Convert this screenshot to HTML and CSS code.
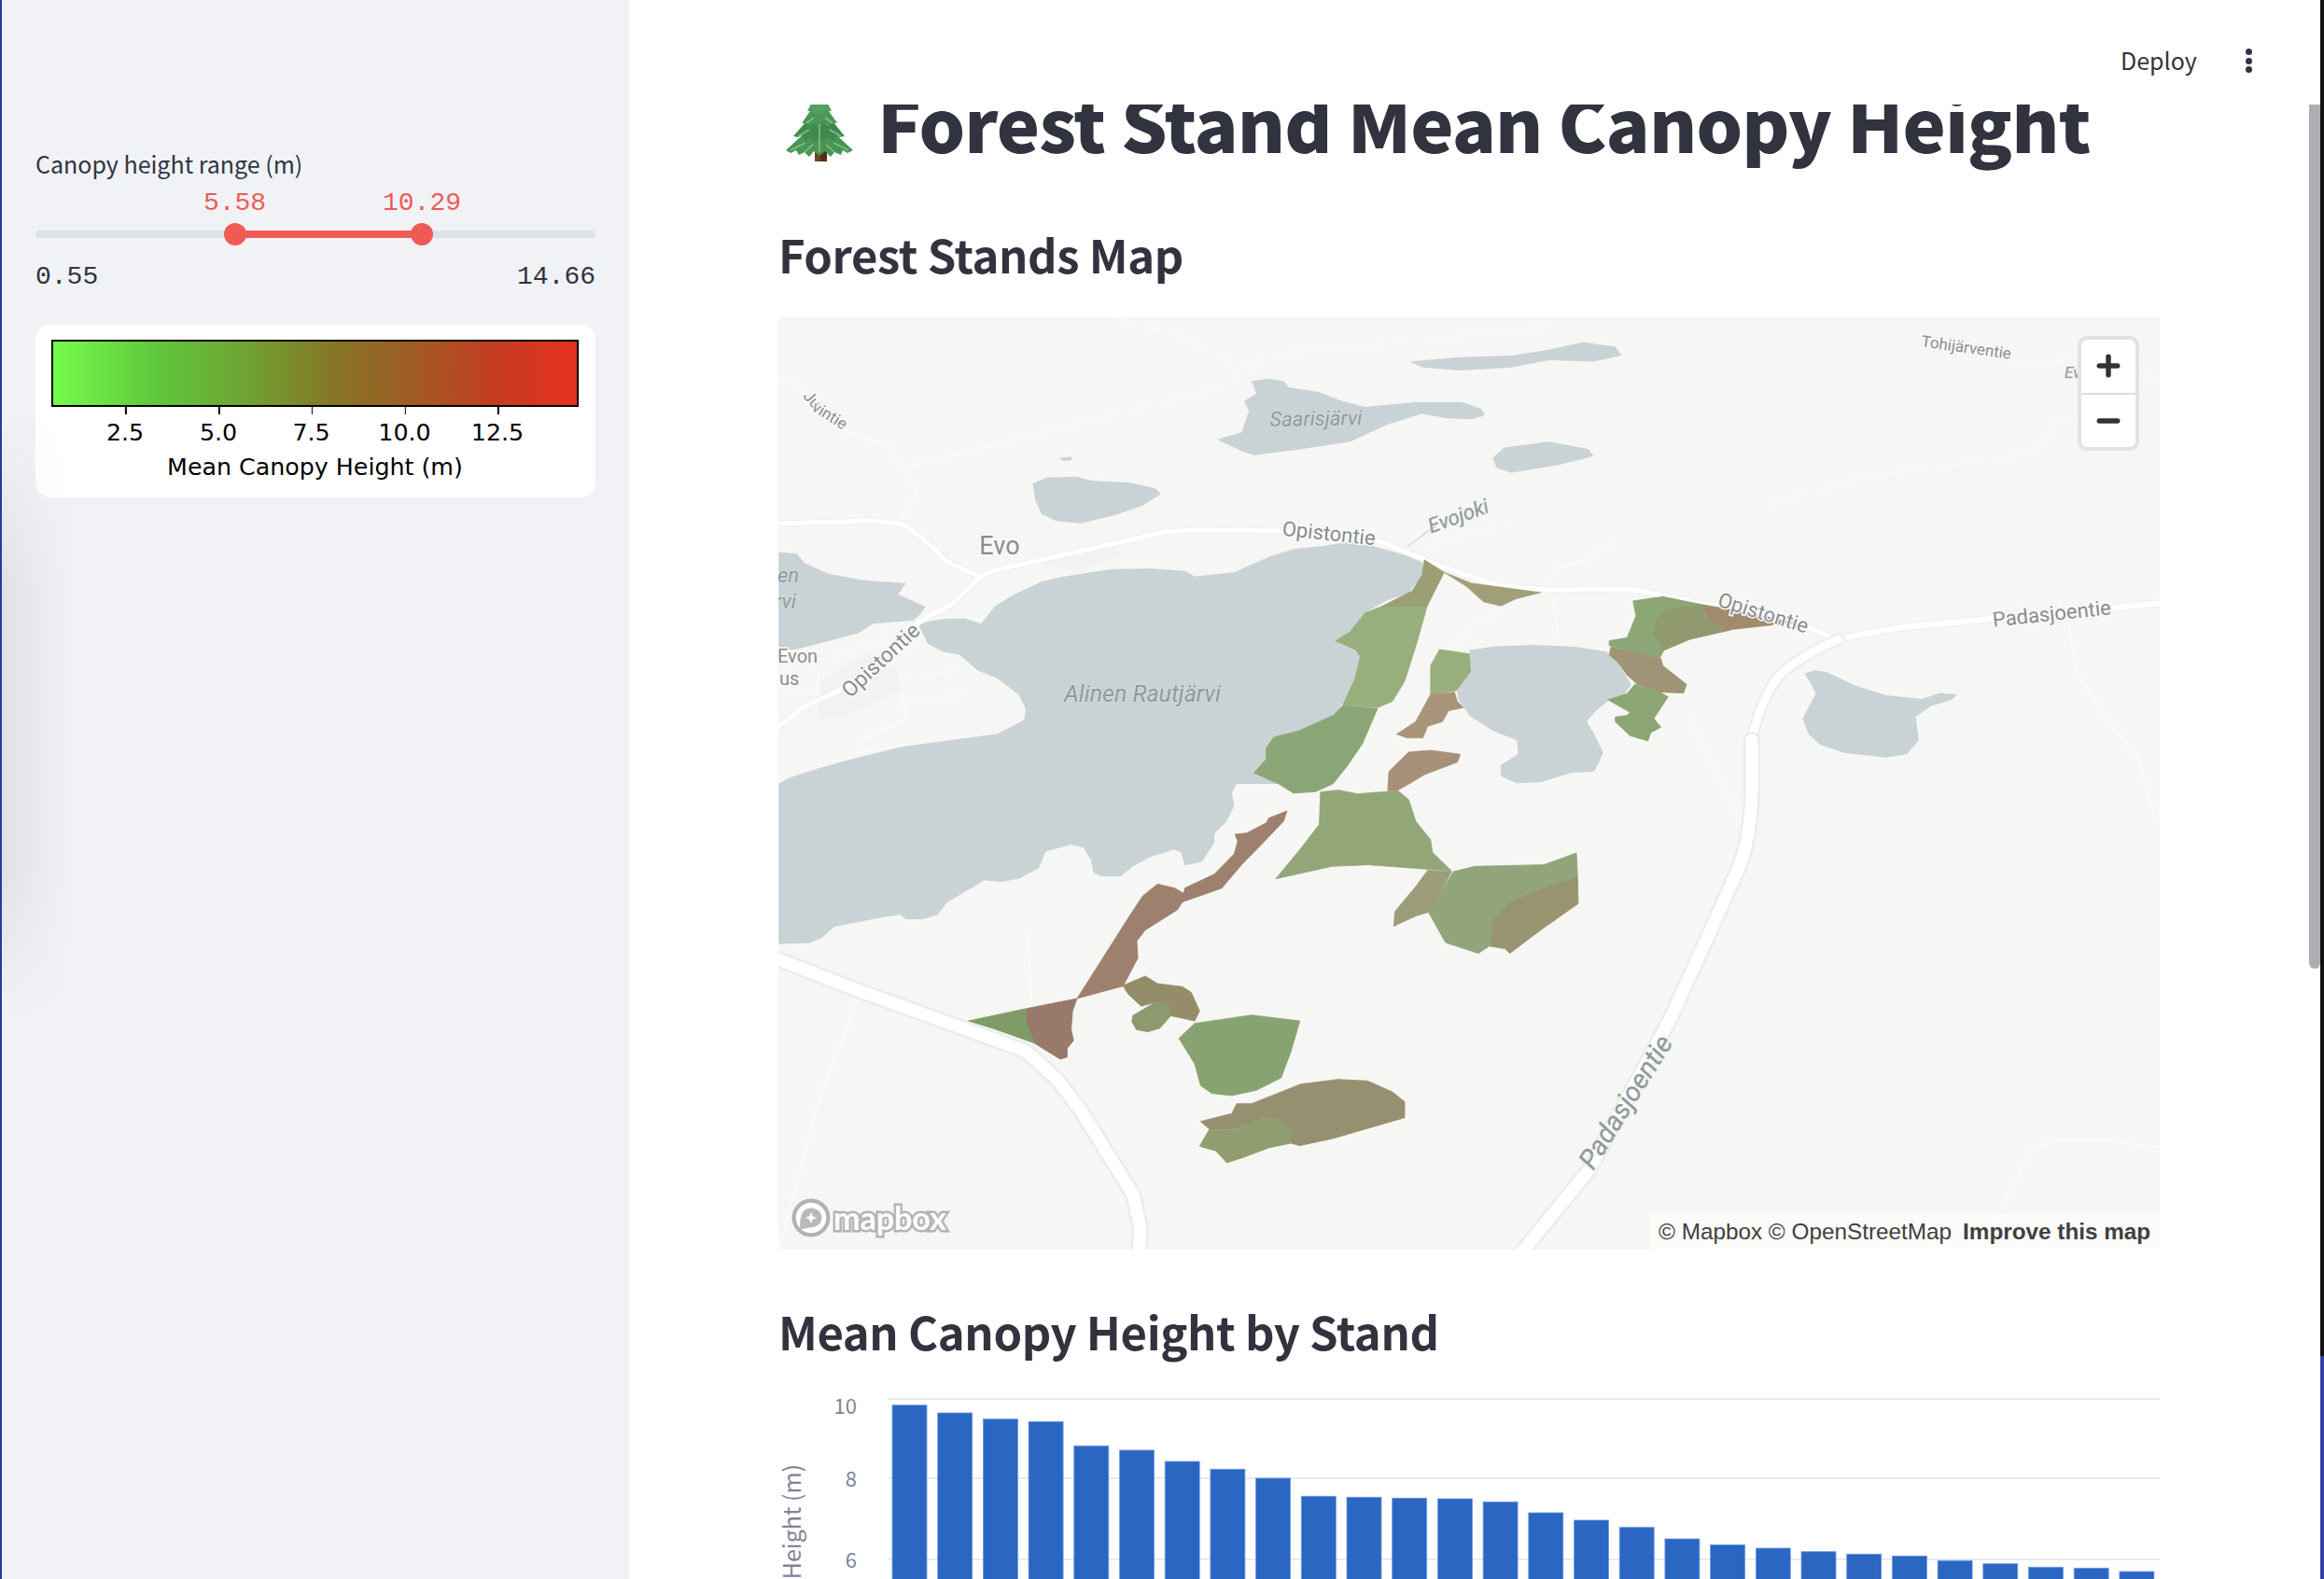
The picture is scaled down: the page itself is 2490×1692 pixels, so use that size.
FILE: index.html
```html
<!DOCTYPE html>
<html lang="en">
<head>
<meta charset="utf-8">
<title>Forest Stand Mean Canopy Height</title>
<link rel="stylesheet" href="styles.css">
</head>
<body>
<div class="app">
  <aside class="sidebar">
    <div class="slider-label">Canopy height range (m)</div>
    <div class="slider">
      <div class="slider-values"><span class="val val-a">5.58</span><span class="val val-b">10.29</span></div>
      <div class="track"><div class="fill"></div><span class="thumb thumb-a"></span><span class="thumb thumb-b"></span></div>
      <div class="slider-range"><span>0.55</span><span>14.66</span></div>
    </div>
    <div class="legend-card">
      <div class="colorbar"></div>
      <div class="ticks"><span class="tick">2.5</span><span class="tick">5.0</span><span class="tick">7.5</span><span class="tick">10.0</span><span class="tick">12.5</span></div>
      <div class="legend-title">Mean Canopy Height (m)</div>
    </div>
  </aside>
  <main class="main">
    <header class="topbar">
      <span class="deploy">Deploy</span>
      <span class="kebab"><i></i><i></i><i></i></span>
    </header>
    <h1 class="title">
      <svg class="tree" viewBox="0 0 76 76" aria-hidden="true">
        <rect x="32" y="50" width="13" height="24" fill="#6d4426"/>
        <rect x="38" y="50" width="7" height="24" fill="#4f2f18"/>
        <path d="M37 30 L60 50 L73 62 L67 65 L62 62 L60 67 L53 64 L49 69 L43 63 L37 68 L31 63 L26 69 L21 64 L15 67 L12 62 L6 65 L1 62 L14 50Z" fill="#4a9556"/>
        <path d="M37 18 L52 32 L64 47 L58 48 L55 46 L52 52 L46 48 L41 54 L37 49 L32 54 L27 48 L21 52 L18 46 L14 48 L9 47 L22 32Z" fill="#3f8a4d"/>
        <path d="M37 8 L47 20 L56 33 L50 33 L46 37 L41 33 L37 38 L32 33 L27 37 L23 33 L18 33 L27 20Z" fill="#4a9858"/>
        <path d="M37 -8 L44 8 L50 20 L44 20 L40 23 L37 20 L33 23 L29 20 L24 20 L30 8Z" fill="#54a061"/>
        <path d="M6 62 L22 54 M68 62 L52 54 M21 64 L30 56 M53 64 L44 56 M14 47 L26 40 M60 47 L48 40 M23 33 L31 27 M51 33 L43 27 M37 34 L37 64" stroke="#7fbf83" stroke-width="1.6" fill="none"/>
      </svg>
      <span>Forest Stand Mean Canopy Height</span>
    </h1>
    <h2 class="heading heading-map">Forest Stands Map</h2>
    <div class="map">
      <svg class="map-svg" viewBox="834 340 1480 999" aria-label="Map of forest stands">
        <rect class="land" x="834" y="340" width="1480" height="999"/>

        <!-- faint tracks -->
        <g transform="translate(830 340) scale(.5294 .3333)" class="track-thin">
          <path d="M8 195 L40 210 L60 250 L140 365 L225 410 L260 480 L290 560 L250 660"/>
          <path class="dotted" d="M270 480 L900 230 L1000 120 L1568 30"/>
          <path class="dotted" d="M690 0 L850 75 L860 110 L950 160"/>
          <path class="grey" d="M1280 738 L1320 690 L1340 670"/>
          <path class="dotted" d="M1320 740 L1480 660"/>
          <path class="dotted" d="M1370 1070 L1410 985 L1490 930"/>
          <path class="dotted" d="M245 1160 L370 1135 M250 1230 L380 1215"/>
          <path d="M250 1170 L268 1290 L170 1365 L165 1400 L260 1375"/>
          <path class="dotted" d="M110 1100 L230 1030"/>
          <path d="M90 1140 L85 1210 L20 1210"/>
        </g>
        <g class="track-thin">
          <path d="M1665 610 L1700 600 L1730 580 M1660 620 L1670 680"/>
          <path d="M1810 770 L1840 830 L1865 880 L1870 900"/>
          <path d="M2215 660 L2225 720 L2260 775 L2290 810 L2310 880"/>
          <path class="dotted" d="M1900 540 L2000 510 L2080 500 L2180 485 L2205 450 L2260 440 L2290 465 M2150 390 L2230 385 M2290 400 L2314 408"/>
          <path d="M2314 1229 L2290 1227 L2260 1222 L2200 1222 L2175 1235 L2135 1310 L2112 1339"/>
          <path d="M920 1070 L880 1170 L834 1340 M1100 992 L1105 1070 L1095 1100 L1090 1130"/>
        </g>
        <path class="patch" d="M1120 595 L1195 580 L1200 596 L1150 612 L1118 605Z"/>
        <path class="patch" d="M880 730 L930 700 L960 715 L965 740 L900 770 L877 770Z"/>

        <!-- water -->
        <g class="water">
          <g transform="translate(830 340) scale(.5294 .3333)">
            <path d="M290 985 L340 970 L385 968 L418 985 L445 930 L480 895 L540 850 L580 835 L680 810 L760 808 L830 815 L850 833 L930 820 L965 795 L1000 770 L1050 745 L1110 735 L1160 722 L1210 735 L1310 780 L1315 830 L1290 870 L1285 885 L1240 910 L1200 945 L1185 985 L1135 1040 L1175 1075 L1185 1090 L1175 1160 L1150 1240 L1130 1280 L1060 1330 L1010 1350 L995 1385 L995 1420 L970 1465 L1020 1500 L935 1500 L925 1530 L930 1570 L915 1620 L890 1660 L890 1690 L865 1750 L830 1762 L822 1720 L808 1712 L760 1735 L725 1765 L700 1798 L660 1797 L645 1785 L640 1745 L625 1705 L600 1695 L548 1718 L535 1770 L495 1805 L458 1815 L425 1810 L350 1880 L330 1920 L300 1935 L265 1935 L255 1920 L215 1930 L120 1960 L95 1995 L70 2012 L8 2015 L8 1500 L30 1480 L100 1445 L170 1415 L260 1380 L330 1365 L400 1350 L450 1340 L505 1295 L508 1260 L495 1215 L450 1160 L410 1135 L375 1085 L340 1075 L310 1050Z"/>
            <path d="M8 755 L45 760 L60 790 L110 825 L180 845 L265 855 L250 890 L305 930 L295 955 L280 975 L200 985 L170 1015 L100 1045 L50 1065 L8 1075Z"/>
            <path d="M522 535 L550 515 L610 512 L640 525 L720 532 L770 550 L782 568 L745 605 L690 635 L620 662 L570 655 L540 632 L528 590Z"/>
            <path d="M965 205 L1000 197 L1030 205 L1040 225 L1100 240 L1150 270 L1195 288 L1300 272 L1390 272 L1430 295 L1438 315 L1410 328 L1360 325 L1310 310 L1240 345 L1165 400 L1060 425 L970 443 L945 430 L895 393 L945 370 L960 300 L950 270 L975 245Z"/>
            <path d="M575 452 L600 448 L602 458 L585 463Z"/>
          </g>
          <g transform="scale(1.588)">
            <path d="M951 244 L985 241 L1020 240 L1045 236 L1068 231 L1090 234 L1094 240 L1075 244 L1045 243 L1020 248 L985 250 L960 248Z"/>
            <path d="M1007 309 L1015 302 L1045 298 L1072 303 L1075 308 L1050 314 L1020 319 L1010 316Z"/>
          </g>
          <g transform="translate(1300 560) scale(.6378 .3333)">
            <path d="M430 410 L470 398 L540 393 L610 400 L660 415 L680 450 L702 520 L690 555 L665 570 L640 610 L627 640 L640 680 L655 740 L640 800 L600 805 L550 835 L510 838 L483 815 L482 780 L512 745 L510 700 L470 670 L430 620 L412 570 L408 530 L432 470Z"/>
            <path d="M993 485 L1010 475 L1030 480 L1080 525 L1130 555 L1190 567 L1220 548 L1250 552 L1240 570 L1205 590 L1180 625 L1185 700 L1165 745 L1130 755 L1060 740 L1020 715 L1000 680 L990 630 L1012 550 L1003 515Z"/>
          </g>
        </g>

        <!-- roads -->
        <g class="roads">
          <path class="road-edge" d="M830 782 L862 757 L909 735 L957 707 L983.5 667 L1020.6 647 L1050 618 L1063 612 L1248 570 L1280 568 L1378 569 L1470 577 L1545 607 L1603 627 L1660 632 L1745 631 L1826 647 L1925 667 L1966 685"/>
          <path class="road-edge" d="M834 561 L936 558 L968 562 L989 577 L1015 602 L1050 618"/>
          <path class="road-core" d="M830 782 L862 757 L909 735 L957 707 L983.5 667 L1020.6 647 L1050 618 L1063 612 L1248 570 L1280 568 L1378 569 L1470 577 L1545 607 L1603 627 L1660 632 L1745 631 L1826 647 L1925 667 L1966 685"/>
          <path class="road-core" d="M834 561 L936 558 L968 562 L989 577 L1015 602 L1050 618"/>
          <path class="road-mid-edge" d="M2320 646 L2135 663 L2040 672 Q1990 680 1970 685"/>
          <path class="road-mid-core" d="M2320 646 L2135 663 L2040 672 Q1990 680 1970 685"/>
          <path class="road-mid2-edge" d="M1970 685 Q1925 705 1905 725 Q1884 755 1877 793"/>
          <path class="road-mid2-core" d="M1970 685 Q1925 705 1905 725 Q1884 755 1877 793"/>
          <path class="road-wide-edge" d="M1877 793 L1877 850 Q1875 900 1864 927 L1842 977 L1804 1060 L1789 1093 L1703 1253 L1628 1345"/>
          <path class="road-wide-core" d="M1877 793 L1877 850 Q1875 900 1864 927 L1842 977 L1804 1060 L1789 1093 L1703 1253 L1628 1345"/>
          <path class="road-wide-edge" d="M826 1025 L924 1063 L1063 1113 L1100 1127 L1133 1157 L1158 1190 L1214 1280 L1222 1317 L1220 1345"/>
          <path class="road-wide-core" d="M826 1025 L924 1063 L1063 1113 L1100 1127 L1133 1157 L1158 1190 L1214 1280 L1222 1317 L1220 1345"/>
        </g>

        <!-- stands -->
        <g class="stands">
        <g transform="translate(830 340) scale(.5294 .3333)">
          <path fill="#9c9e73" stroke="#9c9e73" d="M1315 780 L1355 820 L1320 930 L1228 930 L1290 880 L1310 830Z"/>
          <path fill="#a09f77" stroke="#a09f77" d="M1355 820 L1410 855 L1550 885 L1500 905 L1470 928 L1435 915 L1400 865Z"/>
          <path fill="#97ae7d" stroke="#97ae7d" d="M1228 930 L1320 930 L1315 960 L1300 1045 L1275 1170 L1250 1235 L1220 1255 L1150 1245 L1175 1160 L1185 1090 L1175 1070 L1135 1040 L1165 1010 L1195 950Z"/>
          <path fill="#8ba676" stroke="#8ba676" d="M1150 1247 L1220 1258 L1190 1370 L1160 1440 L1130 1500 L1095 1525 L1050 1530 L1020 1500 L970 1465 L995 1420 L995 1385 L1010 1350 L1060 1330 L1130 1280Z"/>
        </g>
        <g transform="translate(1300 560) scale(.6378 .3333)">
          <path fill="#99ae7e" stroke="#99ae7e" d="M380 408 L430 422 L432 480 L408 540 L365 552 L365 460Z"/>
          <path fill="#a89478" stroke="#a89478" d="M365 552 L405 545 L410 575 L420 595 L395 605 L385 640 L360 655 L352 692 L325 692 L308 680 L340 640Z"/>
          <path fill="#a88f78" stroke="#a88f78" d="M328 738 L365 732 L415 745 L410 770 L355 810 L320 850 L308 862 L293 862 L295 800Z"/>
          <path fill="#92a678" stroke="#92a678" d="M180 866 L210 860 L242 872 L310 862 L328 890 L340 960 L365 1020 L368 1060 L400 1120 L330 1110 L260 1100 L200 1105 L105 1145 L150 1040 L178 970Z"/>
          <path fill="#9c9c79" stroke="#9c9c79" d="M360 1118 L400 1122 L365 1250 L340 1265 L303 1298 L305 1250 L340 1170Z"/>
          <path fill="#92a479" stroke="#92a479" d="M403 1122 L440 1105 L555 1100 L610 1062 L612 1140 L560 1170 L495 1225 L470 1280 L465 1360 L445 1385 L390 1350 L362 1255Z"/>
          <path fill="#97946f" stroke="#97946f" d="M612 1140 L613 1225 L550 1310 L498 1385 L490 1370 L465 1362 L470 1280 L495 1225 L560 1170Z"/>
          <path fill="#8da675" stroke="#8da675" d="M705 252 L755 238 L825 265 L826 305 L865 345 L800 375 L757 410 L750 435 L700 415 L665 395 L665 380 L695 370 L710 300Z"/>
          <path fill="#91996e" stroke="#91996e" d="M745 310 L760 280 L825 265 L826 305 L870 345 L800 375 L757 410 L740 360Z"/>
          <path fill="#a28a6c" stroke="#a28a6c" d="M825 265 L900 290 L975 322 L910 335 L865 345 L828 305Z"/>
          <path fill="#9f9475" stroke="#9f9475" d="M668 400 L700 415 L752 437 L755 460 L795 520 L790 548 L750 545 L712 520 L695 490 L680 450 L665 425Z"/>
          <path fill="#8ba573" stroke="#8ba573" d="M708 520 L750 545 L764 560 L740 630 L752 658 L735 675 L730 702 L700 685 L675 640 L675 625 L695 620 L700 610 L663 570 L695 550Z"/>
        </g>
        <g transform="translate(830 840) scale(.5294 .3333)">
          <path fill="#9e806e" stroke="#9e806e" d="M1037 87 L1030 120 L985 195 L945 260 L905 335 L825 380 L815 405 L750 470 L733 505 L735 560 L705 650 L612 690 L660 570 L720 420 L745 360 L775 322 L810 335 L828 352 L830 335 L890 290 L930 225 L937 185 L932 162 L955 158 L995 125 L1000 110Z"/>
          <path fill="#98796a" stroke="#98796a" d="M612 690 L510 722 L508 760 L525 833 L578 885 L592 878 L592 850 L605 825 L600 790 L603 730Z"/>
          <path fill="#7f9c68" stroke="#7f9c68" d="M510 722 L392 762 L440 785 L525 833 L508 760Z"/>
          <path fill="#958d6a" stroke="#958d6a" d="M705 648 L750 618 L775 642 L825 652 L843 670 L860 730 L850 762 L800 745 L795 710 L770 702 L742 715 L715 675Z"/>
          <path fill="#8d9a6f" stroke="#8d9a6f" d="M725 745 L770 702 L795 705 L802 745 L780 785 L755 797 L732 790 L723 765Z"/>
          <path fill="#87a372" stroke="#87a372" d="M818 818 L850 770 L965 743 L1063 762 L1045 860 L1025 945 L975 985 L925 1002 L885 995 L862 970 L850 900Z"/>
          <path fill="#95906f" stroke="#95906f" d="M1065 965 L1140 950 L1200 955 L1250 990 L1275 1022 L1275 1073 L1130 1140 L1062 1163 L1045 1155 L1045 1110 L1020 1080 L990 1070 L965 1090 L930 1110 L880 1110 L862 1085 L925 1060 L935 1028 L965 1028Z"/>
          <path fill="#8f9d70" stroke="#8f9d70" d="M880 1110 L930 1112 L965 1090 L990 1070 L1020 1080 L1045 1110 L1045 1155 L1000 1170 L950 1200 L915 1218 L893 1180 L860 1165Z"/>
        </g>
        </g>

        <!-- labels -->
        <text class="ml ml-xl" transform="translate(1071 594)">Evo</text>
        <text class="ml" transform="translate(1423 579) rotate(6)">Opistontie</text>
        <text class="ml ml-md" transform="translate(949 713) rotate(-43)">Opistontie</text>
        <text class="ml ml-it" transform="translate(1565 560) rotate(-20)">Evojoki</text>
        <text class="ml ml-it" transform="translate(1410 456) rotate(-1)">Saarisjärvi</text>
        <text class="ml ml-it ml-lg" transform="translate(1224 752)">Alinen Rautjärvi</text>
        <text class="ml ml-it ml-start" transform="translate(833 624)">en</text>
        <text class="ml ml-it ml-start" transform="translate(830 652)">rvi</text>
        <text class="ml ml-sm ml-start" transform="translate(833 710)">Evon</text>
        <text class="ml ml-sm ml-start" transform="translate(835 734)">us</text>
        <text class="ml ml-xs" transform="translate(866 432) rotate(48)">Ju</text>
        <text class="ml ml-xs" transform="translate(886 450) rotate(32)">vintie</text>
        <text class="ml ml-xs" transform="translate(2106 378) rotate(8)">Tohijärventie</text>
        <text class="ml ml-it ml-xs ml-start" transform="translate(2212 405)">Ev</text>
        <text class="ml" transform="translate(2199 665) rotate(-6)">Padasjoentie</text>
        <text class="ml" transform="translate(1887 664) rotate(17)">Opistontie</text>
        <text class="ml ml-xxl ml-it" transform="translate(1750 1186) rotate(-58)">Padasjoentie</text>
      </svg>
      <div class="zoom-ctl">
        <button class="zoom-btn" type="button" aria-label="Zoom in"><svg viewBox="0 0 24 24"><path d="M12 3v18M3 12h18"/></svg></button>
        <button class="zoom-btn" type="button" aria-label="Zoom out"><svg viewBox="0 0 24 24"><path d="M3 12h18"/></svg></button>
      </div>
      <div class="mapbox-logo">
        <svg viewBox="0 0 40 42" aria-hidden="true">
          <circle cx="20" cy="21" r="17.5" fill="#fff" stroke="#b2b2b2" stroke-width="4"/>
          <path d="M9 33 C8 22 10 11 20 11 C27 11 31 16 31 21 C31 28 24 31 18 31Z" fill="#b9b9b9"/>
          <path d="M20 15 l1.6 4.4 4.4 1.6 -4.4 1.6 -1.6 4.4 -1.6 -4.4 -4.4 -1.6 4.4 -1.6Z" fill="#fff"/>
        </svg>
        <span>mapbox</span>
      </div>
      <div class="attrib"><span>© Mapbox © OpenStreetMap</span><b>Improve this map</b></div>
    </div>
    <h2 class="heading heading-chart">Mean Canopy Height by Stand</h2>
    <svg class="chart" viewBox="834 1490 1480 202" aria-label="Bar chart">
      <path class="grid" d="M951 1499H2314M951 1584H2314M951 1671H2314"/>
      <text class="ytick" x="918" y="1515">10</text>
      <text class="ytick" x="918" y="1593">8</text>
      <text class="ytick" x="918" y="1680">6</text>
      <text class="ytitle" transform="translate(858 1569) rotate(-90)">Height (m)</text>
      <g class="bars">
        <rect x="956" y="1505.7" width="37" height="200"/><rect x="1004.7" y="1514" width="37" height="200"/><rect x="1053.4" y="1520.7" width="37" height="200"/><rect x="1102.1" y="1523.3" width="37" height="200"/>
        <rect x="1150.8" y="1549.3" width="37" height="200"/><rect x="1199.5" y="1554" width="37" height="200"/><rect x="1248.2" y="1566" width="37" height="200"/><rect x="1296.9" y="1574.3" width="37" height="200"/>
        <rect x="1345.6" y="1584" width="37" height="200"/><rect x="1394.3" y="1603.3" width="37" height="200"/><rect x="1443" y="1604.3" width="37" height="200"/><rect x="1491.7" y="1605.3" width="37" height="200"/>
        <rect x="1540.4" y="1606" width="37" height="200"/><rect x="1589.1" y="1609.3" width="37" height="200"/><rect x="1637.8" y="1621" width="37" height="200"/><rect x="1686.5" y="1629" width="37" height="200"/>
        <rect x="1735.2" y="1636.7" width="37" height="200"/><rect x="1783.9" y="1649" width="37" height="200"/><rect x="1832.6" y="1655.3" width="37" height="200"/><rect x="1881.3" y="1659" width="37" height="200"/>
        <rect x="1930" y="1662.7" width="37" height="200"/><rect x="1978.7" y="1665.3" width="37" height="200"/><rect x="2027.4" y="1667.3" width="37" height="200"/><rect x="2076.1" y="1672.3" width="37" height="200"/>
        <rect x="2124.8" y="1675.7" width="37" height="200"/><rect x="2173.5" y="1679.3" width="37" height="200"/><rect x="2222.2" y="1680.3" width="37" height="200"/><rect x="2270.9" y="1684" width="37" height="200"/>
      </g>
    </svg>
    <div class="scroll-thumb"></div>
  </main>
  <div class="sidebar-shade"></div>
  <div class="edge edge-left"></div>
  <div class="edge edge-right-dark"></div>
  <div class="edge edge-right-blue"></div>
</div>
</body>
</html>
```
FILE: styles.css
```css
* { box-sizing: border-box; }
html, body { margin: 0; height: 100%; overflow: hidden; background: #fff; }
body { font-family: "Noto Sans CJK SC", "Noto Sans", sans-serif; color: #31333f; }
.app { position: relative; display: flex; width: 2490px; height: 1692px; overflow: hidden; }

/* sidebar */
.sidebar { flex: 0 0 674px; height: 100%; background: #f0f2f6; padding: 154px 36px 0 38px; }
.slider-label { font-size: 25px; line-height: 42px; height: 42px; }
.slider { margin-top: 6px; }
.slider-values { position: relative; height: 36px; font-family: "Liberation Mono", monospace; font-size: 28px; line-height: 36px; color: #f05a55; }
.val { position: absolute; top: -2px; transform: translateX(-50%); }
.val-a { left: 213.5px; }
.val-b { left: 414px; }
.track { position: relative; height: 8px; margin-top: 8.5px; border-radius: 4px; background: #dde1ea; }
.fill { position: absolute; left: 213.5px; width: 200.5px; top: 0; height: 8px; background: #f05a55; }
.thumb { position: absolute; top: -8px; width: 24px; height: 24px; border-radius: 50%; background: #f05a55; }
.thumb-a { left: 201.5px; }
.thumb-b { left: 402px; }
.slider-range { display: flex; justify-content: space-between; margin-top: 25.5px; font-family: "Liberation Mono", monospace; font-size: 28px; line-height: 34px; }
.legend-card { margin-top: 33.5px; height: 185px; padding: 16px 18px 0 17px; border-radius: 16px; background: #fff; color: #000; font-family: "DejaVu Sans", sans-serif; font-size: 25.3px; }
.colorbar { height: 72px; border: 2px solid #000; background: linear-gradient(90deg, #76fb4d 0%, #5fc73c 20%, #6fa433 36%, #867525 54%, #9f5c24 68%, #c33d20 84%, #e6301f 100%); }
.ticks { position: relative; height: 50px; }
.tick { position: absolute; top: 13px; line-height: 30px; transform: translateX(-50%); }
.tick::before { content: ""; position: absolute; left: 50%; top: -13px; width: 1.5px; height: 8px; background: #000; }
.tick:nth-child(1) { left: 79px; }
.tick:nth-child(2) { left: 179px; }
.tick:nth-child(3) { left: 278.5px; }
.tick:nth-child(4) { left: 378.5px; }
.tick:nth-child(5) { left: 478px; }
.legend-title { text-align: center; line-height: 30px; }
.sidebar-shade { position: absolute; left: 2px; top: 440px; width: 74px; height: 650px; pointer-events: none; background: linear-gradient(90deg, rgba(0,0,0,.065), rgba(0,0,0,0)); -webkit-mask-image: linear-gradient(180deg, transparent 0%, #000 30%, #000 75%, transparent 100%); mask-image: linear-gradient(180deg, transparent 0%, #000 30%, #000 75%, transparent 100%); }

/* main */
.main { position: relative; flex: 1; height: 100%; overflow: hidden; background: #fff; padding: 80px 176px 0 160px; }
.topbar { position: absolute; z-index: 2; left: 0; right: 0; top: 0; height: 112px; background: #fff; }
.deploy { position: absolute; left: 1598px; top: 43px; font-size: 25px; line-height: 42px; }
.kebab { position: absolute; left: 1732px; top: 52px; display: flex; flex-direction: column; justify-content: space-between; height: 26px; }
.kebab i { display: block; width: 7px; height: 7px; border-radius: 50%; background: #31333f; }
.title { display: flex; align-items: center; margin: 0; height: 100px; font-size: 78px; line-height: 100px; font-weight: 900; letter-spacing: -.9px; white-space: nowrap; }
.tree { flex: none; width: 76px; height: 76px; margin: 14px 23px 0 7px; overflow: visible; }
.heading { margin: 0; font-weight: 600; font-size: 49px; line-height: 68px; letter-spacing: -.4px; }
.heading-map { margin-top: 58px; }
.map { position: relative; width: 1480px; height: 999px; margin-top: 34px; overflow: hidden; }
.map-svg { display: block; width: 1480px; height: 999px; }
.heading-chart { margin-top: 53px; }
.chart { display: block; width: 1480px; height: 202px; margin-top: 30px; overflow: hidden; }

/* map drawing */
.land { fill: #f6f6f4; }
.water { fill: #c9d2d4; }
.track-thin path { fill: none; stroke: #fbfbfa; stroke-width: 1.5; vector-effect: non-scaling-stroke; }
.track-thin path.dotted { stroke-dasharray: 2 2; stroke: #fdfdfc; }
.track-thin path.grey { stroke: #d5d9da; }
.patch { fill: #f1f2f1; }
.stands path { stroke-width: .8; vector-effect: non-scaling-stroke; }
.roads path { fill: none; stroke-linejoin: round; stroke-linecap: round; }
.road-edge { stroke: #eff0ee; stroke-width: 7; }
.road-core { stroke: #fff; stroke-width: 5; }
.road-mid-edge { stroke: #eff0ee; stroke-width: 8; }
.road-mid-core { stroke: #fff; stroke-width: 6; }
.road-mid2-edge { stroke: #ebedeb; stroke-width: 13; }
.road-mid2-core { stroke: #fff; stroke-width: 9; }
.road-wide-edge { stroke: #ebedeb; stroke-width: 18; }
.road-wide-core { stroke: #fff; stroke-width: 13; }
.ml { font-family: Roboto, sans-serif; font-size: 22px; fill: #888c8f; stroke: #fafafa; stroke-width: 3px; paint-order: stroke; text-anchor: middle; }
.ml-it { font-style: italic; fill: #8f999d; stroke: #dfe3e3; stroke-width: 1px; }
.ml-start { text-anchor: start; }
.ml-sm { font-size: 20px; }
.ml-xs { font-size: 17px; }
.ml-md { font-size: 23px; }
.ml-lg { font-size: 25px; }
.ml-xl { font-size: 27px; }
.ml-xxl { font-size: 29px; }
.zoom-ctl { position: absolute; left: 1392px; top: 20px; width: 66px; height: 123px; display: flex; flex-direction: column; background: #fff; border: 4px solid #e2e2e2; border-radius: 10px; overflow: hidden; }
.zoom-btn { flex: 1; display: flex; align-items: center; justify-content: center; padding: 0; border: 0; background: none; }
.zoom-btn + .zoom-btn { border-top: 2px solid #ddd; }
.zoom-btn svg { width: 26px; height: 26px; fill: none; stroke: #333; stroke-width: 5; stroke-linecap: round; }
.mapbox-logo { position: absolute; left: 14px; bottom: 12px; display: flex; align-items: center; gap: 3px; height: 44px; }
.mapbox-logo svg { width: 42px; height: 44px; }
.mapbox-logo span { font-family: Lato, sans-serif; font-weight: 700; font-size: 34px; color: #fff; -webkit-text-stroke: 5px #b4b4b4; paint-order: stroke fill; line-height: 40px; }
.attrib { position: absolute; right: 0; bottom: 0; width: 547px; height: 39px; display: flex; align-items: center; gap: 12px; padding-left: 10px; background: rgba(255,255,255,.55); font-family: "Liberation Sans", sans-serif; font-size: 24.3px; color: #404040; white-space: nowrap; }

/* chart */
.grid { stroke: #e6eaf1; stroke-width: 2; fill: none; }
.ytick { fill: #808495; font-size: 22px; text-anchor: end; }
.ytitle { fill: #808495; font-size: 25px; text-anchor: end; }
.bars rect { fill: #2b66c3; stroke: #6f9ade; stroke-width: .8; }

/* window chrome */
.scroll-thumb { position: absolute; z-index: 1; right: 4px; top: 112px; width: 12px; height: 926px; border-radius: 0 0 6px 6px; background: #acacb2; }
.edge { position: absolute; z-index: 3; }
.edge-left { left: 0; top: 0; bottom: 0; width: 2px; background: #2e3a94; }
.edge-right-dark { right: 0; top: 0; height: 1453px; width: 4px; background: #111; }
.edge-right-blue { right: 0; top: 1453px; bottom: 0; width: 4px; background: #343f9e; }
```
